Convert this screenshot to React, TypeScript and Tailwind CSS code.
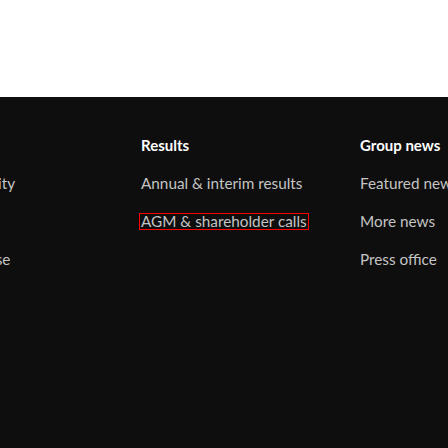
const columns = [
  {
    title: "Investors",
    items: ["Sustainability", "Jobs", "Our purpose"],
  },
  {
    title: "Results",
    items: ["Annual & interim results", "AGM & shareholder calls"],
  },
  {
    title: "Group news",
    items: ["Featured news", "More news", "Press office"],
  },
];

const App = () => {
  return (
    <div className="flex h-[448px] w-[448px] flex-col overflow-hidden bg-white font-['Lato',sans-serif]">
      <div className="h-[97px] shrink-0 bg-white" />
      <div className="flex-1 bg-[#0e0e0e] pt-[38px]">
        <div className="ml-[-74px] flex">
          {columns.map((col, i) => (
            <div key={col.title} className={`${i === 0 ? "w-[215px]" : "w-[219px]"} shrink-0`}>
              <h3
                className={`text-[15px] font-bold leading-5 text-white ${
                  i === 0 ? "invisible" : ""
                }`}
              >
                {col.title}
              </h3>
              <ul className="mt-[18px] flex flex-col gap-[18px]">
                {col.items.map((item) => (
                  <li key={item} className="whitespace-nowrap text-[15.3px] leading-5 text-[#c4c4c4]">
                    {item === "AGM & shareholder calls" ? (
                      <a href="#" className="-ml-[2px] inline-block border border-[#ff0000] px-[1px] leading-[15px]">
                        {item}
                      </a>
                    ) : (
                      <a href="#">{item}</a>
                    )}
                  </li>
                ))}
              </ul>
            </div>
          ))}
        </div>
      </div>
    </div>
  );
};

export default App;
